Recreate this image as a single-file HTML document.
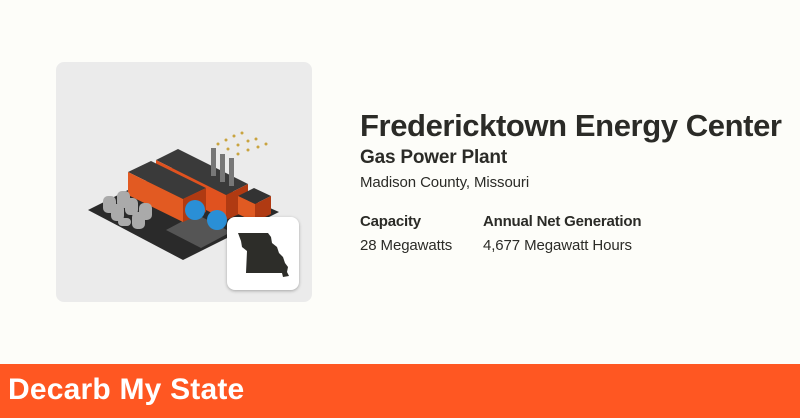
<!DOCTYPE html>
<html><head><meta charset="utf-8"><style>
*{margin:0;padding:0;box-sizing:border-box}
body{width:800px;height:418px;background:#fdfdf9;font-family:"Liberation Sans",sans-serif;color:#2b2b27;position:relative;overflow:hidden}
.card{position:absolute;left:56px;top:62px;width:256px;height:240px;background:#ebebeb;border-radius:8px}
.mo{position:absolute;left:227px;top:217px;width:72px;height:73px;background:#fff;border-radius:8px;box-shadow:0 1px 3px rgba(0,0,0,.3)}
.t{position:absolute;left:360px;white-space:nowrap}
.bar{position:absolute;left:0;top:364px;width:800px;height:54px;background:#ff5722}
.bar span{position:absolute;left:8px;top:9px;font-size:30px;font-weight:bold;color:#fff;letter-spacing:0.2px}
</style></head><body>
<div class="card">
<svg width="256" height="240" viewBox="0 0 256 240">
<polygon points="32,148 120,104 223,150 127,198" fill="#2a2a2a"/>
<polygon points="110,168 140,152 175,170 145,186" fill="#555"/>
<polygon points="100,98 122,87 192,122 170,133" fill="#3a3a3a"/>
<polygon points="100,98 170,133 170,158 100,123" fill="#e0521f"/>
<polygon points="72,110 95,99 150,126 127,137" fill="#3a3a3a"/>
<polygon points="72,110 127,137 127,160 72,133" fill="#e25a22"/>
<polygon points="127,137 150,126 150,150 127,160" fill="#b03a12"/>
<polygon points="170,133 192,122 192,148 170,158" fill="#b03a12"/>
<polygon points="182,134 198,126 215,134 199,142" fill="#333"/>
<polygon points="182,134 199,142 199,160 182,152" fill="#e05a22"/>
<polygon points="199,142 215,134 215,152 199,160" fill="#b03a12"/>
<rect x="155" y="86" width="5" height="28" fill="#777"/>
<rect x="164" y="92" width="5" height="28" fill="#777"/>
<rect x="173" y="96" width="5" height="28" fill="#777"/>
<g fill="#aaa"><rect x="47" y="134" width="13" height="17" rx="5"/><rect x="61" y="129" width="13" height="17" rx="5"/><rect x="55" y="142" width="13" height="17" rx="5"/><rect x="69" y="136" width="13" height="17" rx="5"/><rect x="83" y="141" width="13" height="17" rx="5"/><rect x="76" y="150" width="13" height="17" rx="5"/><rect x="62" y="156" width="13" height="8" rx="4"/></g>
<circle cx="139" cy="148" r="10" fill="#2a8fd6"/><circle cx="161" cy="158" r="10" fill="#2a8fd6"/>
<g fill="#c9a440"><circle cx="162" cy="82" r="1.5"/><circle cx="170" cy="78" r="1.5"/><circle cx="178" cy="74" r="1.5"/><circle cx="186" cy="71" r="1.5"/><circle cx="172" cy="87" r="1.5"/><circle cx="182" cy="83" r="1.5"/><circle cx="192" cy="79" r="1.5"/><circle cx="200" cy="77" r="1.5"/><circle cx="182" cy="92" r="1.5"/><circle cx="192" cy="88" r="1.5"/><circle cx="202" cy="85" r="1.5"/><circle cx="210" cy="82" r="1.5"/></g>
</svg>
</div>
<div class="mo"><svg width="72" height="73" viewBox="0 0 72 73"><path d="M11 16 L41 16 L44 20 L45 26 L50 30 L52 36 L56 40 L58 46 L61 50 L60 55 L62 59 L56 60 L55 56 L19 56 L20 34 L15 30 L14 24 Z" fill="#2d2d29"/></svg></div>
<div class="t" style="top:108px;font-size:31px;font-weight:bold;letter-spacing:-0.4px">Fredericktown Energy Center</div>
<div class="t" style="top:147px;font-size:19px;font-weight:bold;letter-spacing:-0.2px">Gas Power Plant</div>
<div class="t" style="top:174px;font-size:15px;letter-spacing:-0.1px">Madison County, Missouri</div>
<div class="t" style="top:213px;font-size:15px;font-weight:bold;letter-spacing:-0.2px">Capacity</div>
<div class="t" style="top:237px;font-size:15px;letter-spacing:-0.1px">28 Megawatts</div>
<div class="t" style="left:483px;top:213px;font-size:15px;font-weight:bold;letter-spacing:-0.2px">Annual Net Generation</div>
<div class="t" style="left:483px;top:237px;font-size:15px;letter-spacing:-0.1px">4,677 Megawatt Hours</div>
<div class="bar"><span>Decarb My State</span></div>
</body></html>
